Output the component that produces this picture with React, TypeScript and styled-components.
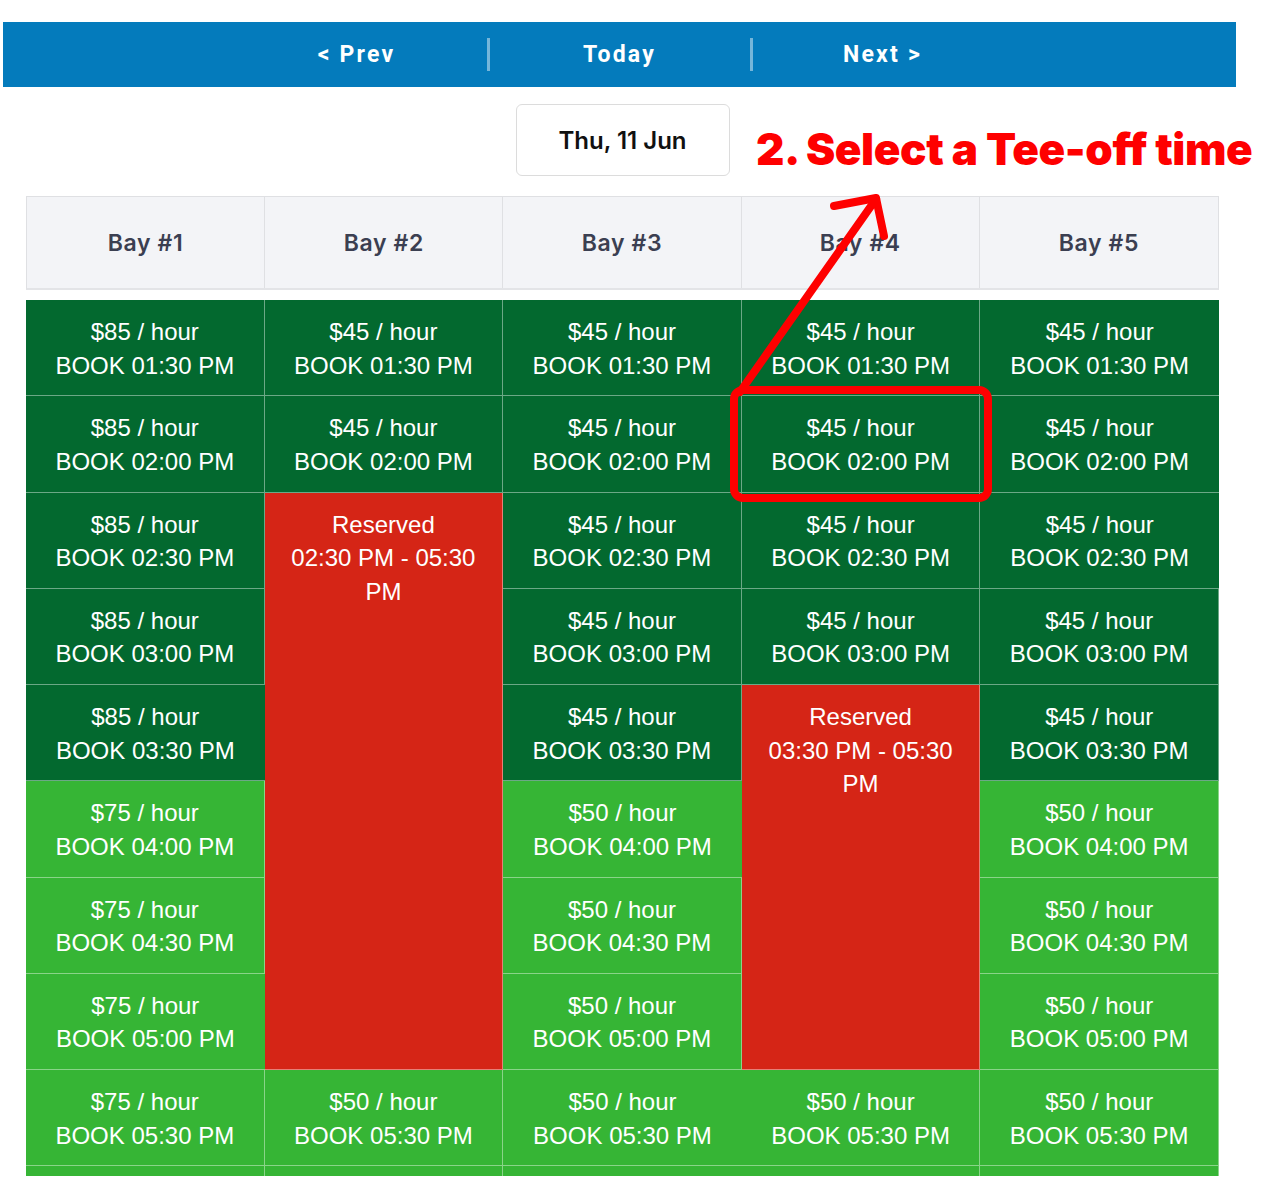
import React from "react";
import styled, { createGlobalStyle } from "styled-components";

type Tone = "peak" | "off" | "reserved";

interface Slot {
    tone: Tone;
    price?: number;
    time?: string;
    span?: number;
    until?: string;
}

const times = ["01:30 PM", "02:00 PM", "02:30 PM", "03:00 PM", "03:30 PM", "04:00 PM", "04:30 PM", "05:00 PM", "05:30 PM"];

// per bay: peak price, off-peak price and an optional reservation [startRow, rows]
const bays = [
    { name: "Bay #1", peak: 85, off: 75 },
    { name: "Bay #2", peak: 45, off: 50, reserved: [2, 6] },
    { name: "Bay #3", peak: 45, off: 50 },
    { name: "Bay #4", peak: 45, off: 50, reserved: [4, 4] },
    { name: "Bay #5", peak: 45, off: 50 },
];

const buildRows = (): (Slot | null)[][] =>
    times.map((time, r) =>
        bays.map((bay) => {
            const res = bay.reserved;
            if (res && r >= res[0] && r < res[0] + res[1]) {
                if (r !== res[0]) return null;
                return { tone: "reserved", time, span: res[1], until: "05:30 PM" };
            }
            const peak = r < 5;
            return { tone: peak ? "peak" : "off", price: peak ? bay.peak : bay.off, time };
        })
    );

const toneColor: Record<Tone, string> = {
    peak: "#03692f",
    off: "#36b535",
    reserved: "#d52516",
};

const App = () => {
    const rows = buildRows();
    return (
        <Page>
            <GlobalStyle />
            <NavBar>
                <NavItem>&lt; Prev</NavItem>
                <NavDivider />
                <NavItem>Today</NavItem>
                <NavDivider />
                <NavItem>Next &gt;</NavItem>
            </NavBar>
            <Content>
                <DateRow>
                    <DateBox>Thu, 11 Jun</DateBox>
                </DateRow>
                <Schedule>
                    <HeadRow>
                        {bays.map((b) => (
                            <HeadCell key={b.name}>{b.name}</HeadCell>
                        ))}
                    </HeadRow>
                    <Body>
                        {rows.flatMap((row, r) =>
                            row.map((slot, c) => {
                                if (!slot) return null;
                                const top = slot.tone === "reserved" ? "Reserved" : `$${slot.price} / hour`;
                                const bottom = slot.tone === "reserved" ? `${slot.time} - ${slot.until}` : `BOOK ${slot.time}`;
                                return (
                                    <Cell key={`${r}-${c}`} $tone={slot.tone} $span={slot.span ?? 1}>
                                        <Line>{top}</Line>
                                        <Line>{bottom}</Line>
                                    </Cell>
                                );
                            })
                        )}
                        {/* next row starts below the fold */}
                        {bays.map((b) => (
                            <Cell key={`tail-${b.name}`} $tone="off" $span={1} />
                        ))}
                    </Body>
                </Schedule>
            </Content>
            <Callout>2. Select a Tee-off time</Callout>
            <Marks width="1276" height="1198" viewBox="0 0 1276 1198">
                <rect x="734" y="390" width="254" height="108" rx="9" fill="none" stroke="#fe0000" strokeWidth="8" />
                <path d="M740 392 L876 199" stroke="#fe0000" strokeWidth="8" strokeLinecap="round" fill="none" />
                <path d="M834 206 L876 198 L884 236" stroke="#fe0000" strokeWidth="8" strokeLinecap="round" strokeLinejoin="round" fill="none" />
            </Marks>
        </Page>
    );
};

const GlobalStyle = createGlobalStyle`
body{
    margin:0;
    background:#ffffff;
}
`;

const Page = styled.div`
position:relative;
width:1276px;
height:1198px;
box-sizing:border-box;
padding:22px 0 0 3px;
overflow:hidden;
`;

const NavBar = styled.div`
width:1233px;
height:65px;
background-color:#047bbc;
display:flex;
justify-content:center;
align-items:center;
`;

const NavItem = styled.div`
width:258px;
text-align:center;
color:#ffffff;
font-family:Roboto, "Liberation Sans", sans-serif;
font-weight:700;
font-size:23px;
letter-spacing:2.2px;
`;

const NavDivider = styled.div`
width:3px;
height:33px;
margin:0 1px;
background-color:rgba(255,255,255,0.45);
`;

const Content = styled.div`
width:1193px;
margin-left:23px;
`;

const DateRow = styled.div`
display:flex;
justify-content:center;
padding-top:17px;
`;

const DateBox = styled.div`
width:214px;
height:72px;
box-sizing:border-box;
border:1px solid #dcdcdc;
border-radius:6px;
display:flex;
justify-content:center;
align-items:center;
font-family:Inter, "Noto Sans", sans-serif;
font-weight:600;
font-size:24px;
color:#111111;
`;

const Schedule = styled.div`
margin-top:20px;
`;

const HeadRow = styled.div`
display:grid;
grid-template-columns:repeat(5, 1fr);
height:94px;
box-sizing:border-box;
background-color:#f3f4f7;
border:1px solid #dfe0e3;
border-bottom:2px solid #e3e4e7;
`;

const HeadCell = styled.div`
display:flex;
justify-content:center;
align-items:center;
border-right:1px solid #dfe0e3;
font-family:Inter, "Noto Sans", sans-serif;
font-weight:600;
font-size:23px;
letter-spacing:0.6px;
color:#3b3f51;
&:last-child{
    border-right:none;
}
`;

const Body = styled.div`
display:grid;
grid-template-columns:repeat(5, 1fr);
grid-auto-rows:96.25px;
margin-top:10px;
height:876px;
overflow:hidden;
`;

const Cell = styled.div<{ $tone: Tone; $span: number }>`
grid-row:span ${(p) => p.$span};
box-sizing:border-box;
padding:15px 12px 0;
background-color:${(p) => toneColor[p.$tone]};
border-right:1px solid rgba(255,255,255,0.42);
border-bottom:1px solid rgba(255,255,255,0.42);
text-align:center;
font-family:"Liberation Sans", Arial, sans-serif;
font-size:24px;
line-height:33.5px;
color:#ffffff;
&:nth-child(5n){
    border-right:none;
}
`;

const Line = styled.div`
display:block;
`;

const Callout = styled.div`
position:absolute;
left:756px;
top:122px;
color:#fe0000;
font-family:Inter, "Noto Sans", sans-serif;
font-weight:900;
font-size:44px;
letter-spacing:-0.4px;
white-space:nowrap;
`;

const Marks = styled.svg`
position:absolute;
left:0;
top:0;
pointer-events:none;
`;

export default App;
